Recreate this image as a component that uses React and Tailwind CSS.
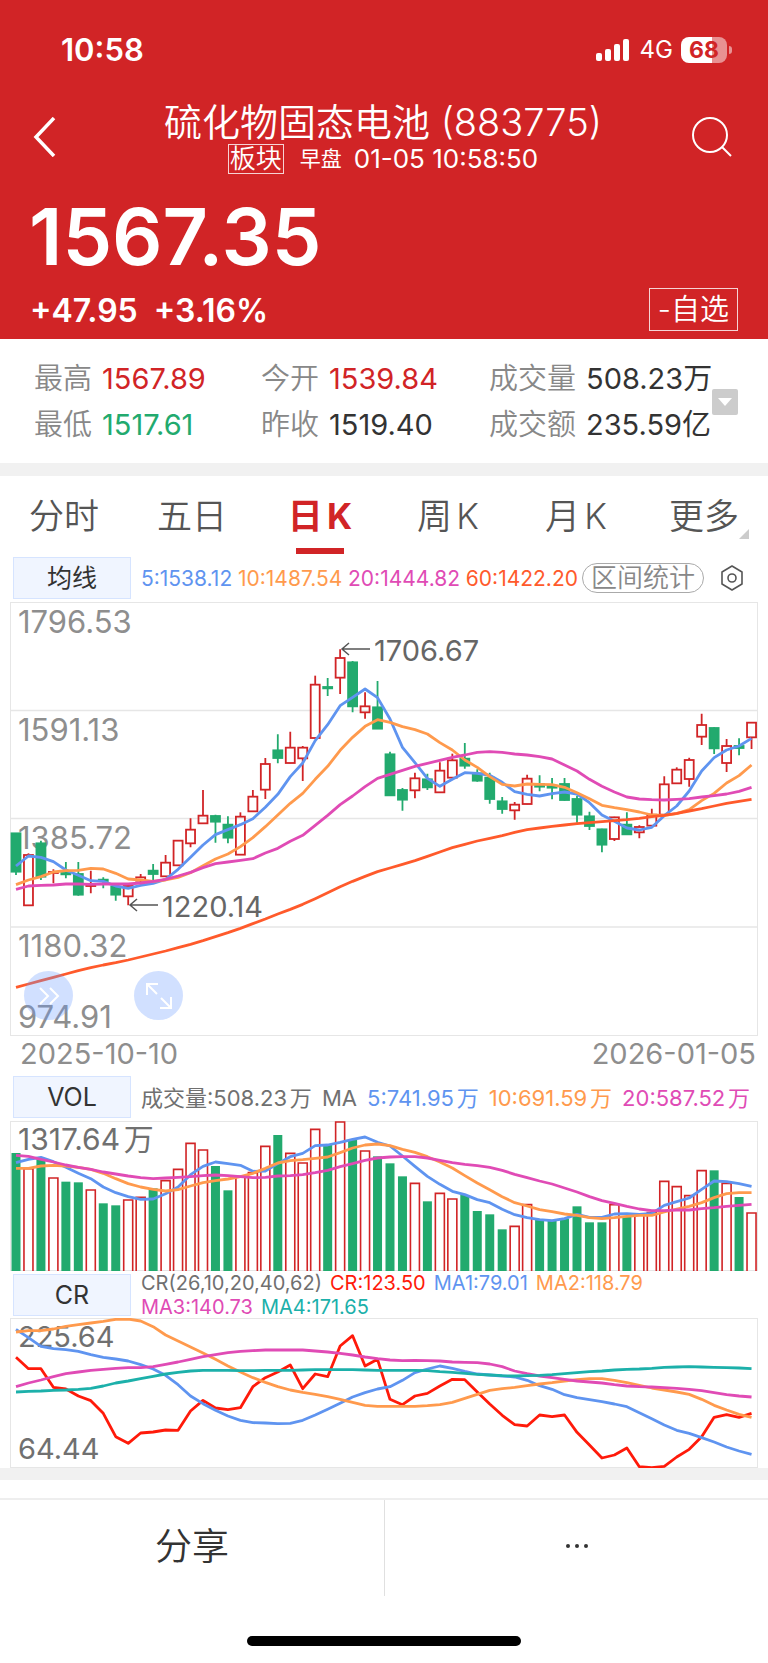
import { useState } from 'react';

const RED = '#d12426';
const GREEN = '#22aa6e';
const BLUE = '#5f94f0';
const ORANGE = '#ff9a4d';
const PINK = '#e04bb5';
const CORAL = '#ff5a2b';
const TEAL = '#1cb0aa';

const STEP = 187 / 15;
const barX = (i) => 6 + i * STEP;

// up/down, high, body top, body bottom, low, volume top
const DAYS = [
  ['d', 700, 700, 815, 825, 369], ['u', 760, 765, 916, 916, 416], ['d', 722, 730, 830, 840, 385],
  ['u', 808, 816, 819, 850, 444], ['d', 786, 819, 823, 835, 455], ['d', 786, 822, 884, 887, 457],
  ['u', 812, 855, 858, 880, 480], ['d', 832, 839, 843, 865, 520], ['d', 858, 860, 884, 902, 526],
  ['u', 850, 858, 889, 916, 510], ['u', 822, 832, 842, 850, 502], ['d', 792, 812, 822, 840, 475],
  ['u', 765, 788, 829, 829, 452], ['u', 722, 722, 796, 796, 418], ['u', 655, 689, 730, 742, 340],
  ['u', 570, 647, 670, 670, 360], ['d', 644, 648, 665, 728, 408], ['d', 649, 674, 713, 730, 481],
  ['u', 637, 650, 764, 764, 440], ['u', 570, 590, 634, 634, 428], ['u', 474, 492, 569, 597, 349],
  ['d', 403, 451, 474, 490, 315], ['u', 395, 443, 489, 490, 370], ['u', 438, 443, 475, 543, 399],
  ['u', 227, 254, 414, 414, 298], ['d', 234, 261, 265, 288, 345], ['u', 148, 174, 233, 282, 276],
  ['d', 183, 187, 319, 337, 330], ['u', 277, 319, 337, 356, 363], ['d', 243, 322, 386, 387, 379],
  ['d', 455, 463, 586, 587, 400], ['d', 564, 570, 599, 632, 439], ['u', 518, 535, 571, 595, 460],
  ['d', 521, 538, 562, 570, 514], ['u', 487, 512, 577, 578, 490], ['u', 461, 481, 533, 533, 507],
  ['d', 429, 476, 497, 506, 495], ['d', 508, 520, 542, 545, 543], ['d', 518, 533, 597, 611, 553],
  ['d', 591, 604, 627, 641, 598], ['u', 606, 614, 631, 659, 589], ['u', 524, 536, 612, 613, 524],
  ['d', 526, 552, 560, 574, 570], ['d', 534, 557, 563, 598, 573], ['d', 534, 552, 600, 602, 566],
  ['d', 587, 597, 644, 668, 529], ['d', 635, 649, 678, 690, 577], ['d', 686, 688, 734, 757, 577],
  ['u', 650, 652, 717, 723, 524], ['d', 637, 674, 703, 704, 560], ['u', 676, 681, 697, 715, 555],
  ['u', 626, 644, 677, 678, 548], ['u', 529, 553, 644, 645, 454], ['u', 502, 509, 550, 550, 470],
  ['u', 473, 480, 537, 560, 497], ['u', 341, 375, 410, 435, 422], ['d', 382, 384, 445, 462, 421],
  ['u', 417, 438, 489, 516, 460], ['d', 415, 438, 444, 466, 501], ['u', 367, 368, 412, 447, 549],
];

const PRICE_LINES = [
  [BLUE, [798, 768, 772, 785, 810, 826, 842, 844, 858, 865, 856, 850, 838, 808, 772, 735, 704, 689, 674, 656, 622, 583, 530, 489, 422, 374, 317, 292, 267, 293, 357, 442, 488, 535, 559, 538, 518, 520, 526, 547, 575, 583, 588, 581, 576, 582, 608, 645, 664, 684, 690, 682, 647, 618, 573, 513, 473, 450, 438, 415]],
  [ORANGE, [854, 840, 830, 816, 812, 811, 805, 807, 820, 837, 840, 844, 840, 832, 818, 797, 777, 762, 740, 713, 680, 645, 610, 580, 538, 499, 451, 412, 379, 359, 367, 380, 389, 402, 428, 450, 480, 502, 530, 553, 558, 552, 553, 554, 562, 578, 596, 616, 623, 629, 636, 645, 646, 641, 629, 602, 580, 549, 527, 495]],
  [PINK, [868, 858, 856, 855, 852, 852, 853, 852, 852, 852, 849, 844, 838, 828, 817, 803, 791, 786, 781, 776, 759, 745, 724, 706, 676, 646, 614, 588, 560, 535, 523, 511, 499, 490, 481, 472, 465, 457, 455, 457, 462, 465, 470, 477, 495, 513, 538, 559, 576, 591, 597, 599, 600, 598, 596, 591, 587, 582, 574, 562]],
  [CORAL, [1162, 1152, 1142, 1132, 1122, 1112, 1103, 1095, 1088, 1080, 1071, 1062, 1053, 1043, 1033, 1022, 1010, 998, 985, 971, 957, 942, 928, 913, 896, 878, 860, 844, 829, 815, 804, 793, 782, 769, 756, 743, 733, 723, 715, 707, 697, 689, 684, 679, 675, 671, 668, 665, 662, 659, 655, 650, 646, 640, 633, 626, 618, 610, 604, 598]],
];

const VOLUME_LINES = [
  [BLUE, [398, 388, 382, 395, 412, 430, 446, 471, 488, 500, 508, 507, 491, 471, 434, 409, 396, 401, 406, 424, 423, 401, 380, 370, 347, 345, 337, 328, 321, 337, 348, 378, 409, 439, 463, 484, 494, 509, 518, 538, 554, 563, 569, 572, 566, 553, 562, 562, 552, 551, 553, 550, 526, 515, 504, 478, 453, 455, 461, 469]],
  [ORANGE, [415, 415, 408, 406, 408, 412, 418, 430, 446, 461, 471, 478, 483, 479, 468, 458, 452, 447, 440, 430, 415, 399, 392, 389, 385, 381, 368, 354, 345, 342, 347, 358, 367, 380, 396, 414, 437, 459, 479, 500, 518, 528, 539, 545, 552, 556, 563, 566, 563, 559, 556, 556, 546, 537, 529, 518, 503, 491, 488, 488]],
  [PINK, [376, 379, 388, 396, 405, 412, 418, 426, 432, 438, 443, 446, 444, 442, 440, 437, 435, 437, 440, 443, 442, 438, 437, 434, 428, 421, 410, 401, 391, 384, 381, 380, 380, 384, 391, 398, 403, 407, 412, 421, 433, 443, 453, 462, 474, 486, 500, 512, 520, 529, 537, 542, 542, 540, 540, 536, 533, 529, 526, 523]],
];

const CR_LINES = [
  ['#ff1a0a', [262, 296, 296, 352, 357, 378, 392, 430, 500, 520, 489, 486, 480, 481, 423, 391, 414, 419, 413, 350, 323, 306, 285, 356, 312, 320, 228, 197, 288, 268, 388, 404, 378, 370, 348, 328, 329, 366, 402, 436, 464, 468, 435, 440, 435, 487, 525, 564, 555, 534, 590, 593, 589, 561, 538, 500, 442, 434, 442, 430]],
  [BLUE, [178, 203, 229, 236, 239, 244, 254, 262, 267, 273, 284, 297, 316, 344, 378, 401, 421, 438, 451, 458, 459, 461, 460, 451, 435, 418, 400, 381, 368, 357, 350, 331, 308, 297, 288, 295, 304, 312, 315, 318, 321, 331, 347, 358, 374, 383, 389, 395, 402, 410, 428, 446, 465, 481, 490, 503, 516, 531, 543, 553]],
  [ORANGE, [186, 182, 182, 177, 169, 164, 159, 154, 148, 147, 153, 170, 195, 213, 231, 249, 268, 288, 306, 323, 337, 350, 360, 367, 373, 380, 388, 397, 406, 409, 409, 409, 409, 407, 404, 397, 385, 373, 361, 356, 352, 347, 342, 338, 333, 329, 326, 326, 331, 338, 346, 354, 360, 366, 373, 388, 406, 420, 433, 442]],
  [PINK, [350, 339, 330, 320, 311, 306, 301, 298, 295, 293, 293, 290, 283, 276, 268, 260, 254, 248, 244, 242, 240, 240, 240, 240, 243, 246, 250, 255, 261, 266, 270, 272, 271, 272, 273, 276, 277, 278, 282, 290, 303, 311, 318, 323, 328, 333, 336, 339, 344, 348, 350, 351, 353, 355, 358, 362, 368, 374, 378, 381]],
  [TEAL, [366, 364, 363, 361, 360, 358, 355, 348, 339, 333, 326, 319, 312, 307, 303, 301, 301, 301, 302, 302, 301, 301, 301, 300, 299, 299, 299, 299, 300, 301, 301, 301, 301, 302, 305, 307, 310, 313, 315, 317, 318, 317, 316, 314, 311, 308, 305, 303, 300, 298, 297, 295, 292, 291, 290, 291, 292, 293, 294, 296]],
];

const STATS = [
  { label: '最高', value: '1567.89', color: 'text-[#d12426]' },
  { label: '今开', value: '1539.84', color: 'text-[#d12426]' },
  { label: '成交量', value: '508.23万', color: 'text-[#333333]' },
  { label: '最低', value: '1517.61', color: 'text-[#22aa6e]' },
  { label: '昨收', value: '1519.40', color: 'text-[#333333]' },
  { label: '成交额', value: '235.59亿', color: 'text-[#333333]' },
];

const TABS = ['分时', '五日', '日K', '周K', '月K', '更多'];

function Lines({ lines, top }) {
  return lines.map(([color, values]) => (
    <polyline
      key={color}
      points={values.map((v, i) => `${barX(i)},${(v - top) / 3}`).join(' ')}
      fill="none"
      stroke={color}
      strokeWidth="2.8"
      strokeLinejoin="round"
    />
  ));
}

function StatusBar() {
  return (
    <div className="flex items-center justify-between pt-7 pr-9 pl-[61px]">
      <span className="text-[31px] leading-11 font-semibold">10:58</span>
      <div className="flex items-center gap-2">
        <svg width="36" height="24" viewBox="0 0 36 24" fill="#fff">
          <rect x="0" y="15" width="6" height="8" rx="2" />
          <rect x="9" y="11" width="6" height="12" rx="2" />
          <rect x="18" y="6" width="6" height="17" rx="2" />
          <rect x="27" y="1" width="6" height="22" rx="2" />
        </svg>
        <span className="text-2xl leading-8">4G</span>
        <div className="flex items-center gap-0.5">
          <div className="flex h-[26px] w-[46px] items-center justify-center rounded-lg bg-linear-to-r from-white from-68% to-white/50 to-68% text-[23px] leading-none font-bold text-[#d12426]">
            68
          </div>
          <div className="h-2 w-[3px] rounded-r-full bg-white/50" />
        </div>
      </div>
    </div>
  );
}

function Header() {
  return (
    <header className="bg-[#d12426] pb-2 text-white">
      <StatusBar />
      <div className="flex items-start justify-between pt-[29px] pr-[34px] pl-8">
        <button aria-label="返回" className="pt-4">
          <svg width="26" height="40" viewBox="0 0 26 40" fill="none" stroke="#fff" strokeWidth="3.5">
            <path d="M22 1 4 20l18 19" />
          </svg>
        </button>
        <div className="flex flex-col items-center pl-4">
          <h1 className="text-[38px] leading-[43px] font-[350]">硫化物固态电池 (883775)</h1>
          <div className="flex items-center text-[26px] leading-7">
            <span className="border border-white/80 px-px leading-7 font-[350]">板块</span>
            <span className="ml-4 text-[21px]">早盘</span>
            <span className="ml-3">01-05 10:58:50</span>
          </div>
        </div>
        <button aria-label="搜索" className="pt-4">
          <svg width="42" height="42" viewBox="0 0 42 42" fill="none" stroke="#fff" strokeWidth="2">
            <circle cx="18" cy="18" r="17" />
            <path d="m30 30 9 9" />
          </svg>
        </button>
      </div>
      <div className="mt-[22px] pl-[29px] text-[79px] leading-20 font-semibold">1567.35</div>
      <div className="mt-[11px] flex items-center justify-between px-[30px]">
        <div className="flex gap-4 pt-1 text-[32px] leading-10 font-semibold">
          <span>+47.95</span>
          <span>+3.16%</span>
        </div>
        <button className="border border-white/80 px-2 text-[29px] leading-[41px] font-[350]">-自选</button>
      </div>
    </header>
  );
}

function Stats() {
  return (
    <section className="flex items-center border-b-[13px] border-[#f1f1f1] pt-[17px] pr-[30px] pb-[15px] pl-[34px]">
      <div className="grid flex-1 grid-cols-[227px_228px_1fr] text-[29px] leading-[46px] whitespace-nowrap [text-autospace:no-autospace]">
        {STATS.map((s) => (
          <div key={s.label} className="flex gap-2.5">
            <span className="font-[350] text-[#888888]">{s.label}</span>
            <span className={s.color}>{s.value}</span>
          </div>
        ))}
      </div>
      <button aria-label="展开" className="flex h-[26px] w-[26px] shrink-0 items-center justify-center rounded-xs bg-[#cccccc]">
        <svg width="14" height="10" viewBox="0 0 14 10" fill="#fff">
          <path d="M0 1h14L7 9z" />
        </svg>
      </button>
    </section>
  );
}

function Tabs() {
  const [active, setActive] = useState('日K');

  return (
    <nav className="grid grid-cols-6">
      {TABS.map((tab) => (
        <button
          key={tab}
          onClick={() => setActive(tab)}
          className={`relative flex flex-col items-center pt-2 pb-px text-[35px] leading-16 ${
            active === tab ? 'font-bold text-[#d12426]' : 'font-[350] text-[#555555]'
          }`}
        >
          {tab}
          {active === tab && <span className="h-1.5 w-12 bg-[#d12426]" />}
          {tab === '更多' && (
            <svg className="absolute right-[19px] bottom-4" width="10" height="10" viewBox="0 0 10 10" fill="#cccccc">
              <path d="M10 0v10H0z" />
            </svg>
          )}
        </button>
      ))}
    </nav>
  );
}

function IndicatorButton({ children }) {
  return (
    <button className="h-[42px] w-[118px] shrink-0 border border-[#d6e4ff] bg-[#f0f5ff] text-[25px] leading-10 text-[#333333]">
      {children}
    </button>
  );
}

function PriceChart() {
  return (
    <div className="relative mx-2.5">
      <svg className="block w-full" viewBox="0 0 748 434" fontFamily="Inter, sans-serif">
        <g fill="none" stroke="#e6e6e6">
          <rect x="0.5" y="0.5" width="747" height="433" />
          <path d="M0 108.5h748M0 216.5h748M0 325h748" strokeWidth="1.5" />
        </g>
        <g fill="#8e8e8e" fontSize="31">
          <text x="8" y="31">1796.53</text>
          <text x="8" y="139">1591.13</text>
          <text x="8" y="247">1385.72</text>
          <text x="8" y="355">1180.32</text>
          <text x="8" y="426">974.91</text>
        </g>
        {DAYS.map(([dir, high, top, bottom, low], i) => {
          const [h, t, b, l] = [high, top, bottom, low].map((v) => (v - 6) / 3);
          const up = dir === 'u';
          return (
            <g key={i} stroke={up ? RED : GREEN} strokeWidth="1.8">
              <path d={`M${barX(i)} ${h}V${t}M${barX(i)} ${b}V${l}`} />
              <rect x={barX(i) - 4.5} y={t} width="9" height={b - t} fill={up ? 'none' : GREEN} />
            </g>
          );
        })}
        <Lines lines={PRICE_LINES} top={6} />
        <path d="M360 47h-28m7-6-7 6 7 6M148 303h-28m7-6-7 6 7 6" stroke="#555555" strokeWidth="1.5" fill="none" />
        <g fill="#666666" fontSize="29">
          <text x="364" y="59">1706.67</text>
          <text x="152" y="315">1220.14</text>
        </g>
      </svg>
      <div className="absolute bottom-4 left-[14px] flex gap-[61px]">
        <button aria-label="快进" className="flex size-[49px] items-center justify-center rounded-full bg-[#6699ff]/30">
          <svg width="22" height="18" viewBox="0 0 22 18" fill="none" stroke="#fff" strokeWidth="2">
            <path d="m2 1 8 8-8 8M12 1l8 8-8 8" />
          </svg>
        </button>
        <button aria-label="全屏" className="flex size-[49px] items-center justify-center rounded-full bg-[#6699ff]/30">
          <svg width="26" height="26" viewBox="0 0 26 26" fill="none" stroke="#fff" strokeWidth="2">
            <path d="M1 12V1h11M1 1l10 10M25 14v11H14M25 25 15 15" />
          </svg>
        </button>
      </div>
    </div>
  );
}

function VolumeChart() {
  return (
    <svg className="block w-full px-2.5" viewBox="0 0 748 150" fontFamily="Inter, 'Noto Sans CJK SC', sans-serif">
      <rect x="0.5" y="0.5" width="747" height="149" fill="none" stroke="#e6e6e6" />
      <text x="8" y="29" fill="#707070" fontSize="30">1317.64万</text>
      {DAYS.map(([dir, , , , , volume], i) => {
        const y = (volume - 273) / 3;
        return dir === 'u' ? (
          <path key={i} d={`M${barX(i) - 4.5} 150V${y}h9V150`} fill="none" stroke={RED} strokeWidth="1.6" />
        ) : (
          <rect key={i} x={barX(i) - 4.5} y={y} width="9" height={150 - y} fill={GREEN} />
        );
      })}
      <Lines lines={VOLUME_LINES} top={273} />
    </svg>
  );
}

function CrChart() {
  return (
    <svg className="block w-full px-2.5" viewBox="0 0 748 150" fontFamily="Inter, sans-serif">
      <rect x="0.5" y="0.5" width="747" height="149" fill="none" stroke="#e6e6e6" />
      <g fill="#707070" fontSize="29">
        <text x="8" y="29">225.64</text>
        <text x="8" y="141">64.44</text>
      </g>
      <Lines lines={CR_LINES} top={144} />
    </svg>
  );
}

export default function App() {
  return (
    <main className="min-h-screen bg-white font-[Inter,'Noto_Sans_CJK_SC',sans-serif] [text-autospace:normal]">
      <Header />
      <Stats />
      <Tabs />

      <div className="mt-0.5 flex items-center pr-6 pb-[3px] pl-[13px]">
        <IndicatorButton>均线</IndicatorButton>
        <div className="ml-2.5 flex flex-1 justify-between pt-0.5 text-[21px] whitespace-nowrap">
          <span className="text-[#5f94f0]">5:1538.12</span>
          <span className="text-[#ff9a4d]">10:1487.54</span>
          <span className="text-[#e04bb5]">20:1444.82</span>
          <span className="text-[#ff5a2b]">60:1422.20</span>
        </div>
        <button className="ml-1 shrink-0 rounded-full border border-[#aaaaaa] px-2 text-[26px] leading-7 font-[350] text-[#888888]">
          区间统计
        </button>
        <button aria-label="设置" className="ml-4">
          <svg width="24" height="26" viewBox="0 0 24 26" fill="none" stroke="#555" strokeWidth="1.6">
            <path d="M12 1 22 7v12l-10 6L2 19V7z" strokeLinejoin="round" />
            <circle cx="12" cy="13" r="4" />
          </svg>
        </button>
      </div>
      <PriceChart />

      <div className="flex justify-between pr-3 pl-5 text-[29px] leading-9 text-[#8e8e8e]">
        <span>2025-10-10</span>
        <span>2026-01-05</span>
      </div>

      <div className="mt-1 flex items-center pr-[18px] pb-[3px] pl-[13px]">
        <IndicatorButton>VOL</IndicatorButton>
        <div className="ml-2.5 flex flex-1 justify-between pt-0.5 text-[22px] whitespace-nowrap text-[#707070]">
          <span>成交量:508.23万</span>
          <span>MA</span>
          <span className="text-[#5f94f0]">5:741.95万</span>
          <span className="text-[#ff9a4d]">10:691.59万</span>
          <span className="text-[#e04bb5]">20:587.52万</span>
        </div>
      </div>
      <VolumeChart />

      <div className="flex h-[47px] items-center pr-22 pl-[13px]">
        <IndicatorButton>CR</IndicatorButton>
        <div className="ml-2.5 flex flex-wrap gap-x-2 text-xl leading-6 whitespace-nowrap">
          <span className="text-[#707070]">CR(26,10,20,40,62)</span>
          <span className="text-[#ff1a0a]">CR:123.50</span>
          <span className="text-[#5f94f0]">MA1:79.01</span>
          <span className="text-[#ff9a4d]">MA2:118.79</span>
          <span className="text-[#e04bb5]">MA3:140.73</span>
          <span className="text-[#1cb0aa]">MA4:171.65</span>
        </div>
      </div>
      <CrChart />

      <div className="h-3 bg-[#f1f1f1]" />
      <footer className="mt-[18px] border-t-2 border-[#eeeeee]">
        <div className="grid grid-cols-2 text-[#333333]">
          <button className="h-24 pb-1 text-[37px] leading-none font-[350]">分享</button>
          <button className="flex h-24 items-center justify-center border-l border-[#e0e0e0] pb-1" aria-label="更多">
            <svg width="24" height="6" viewBox="0 0 24 6" fill="#333">
              <circle cx="3" cy="3" r="2" />
              <circle cx="12" cy="3" r="2" />
              <circle cx="21" cy="3" r="2" />
            </svg>
          </button>
        </div>
        <div className="mx-auto mt-10 mb-4 h-2.5 w-[274px] rounded-full bg-black" />
      </footer>
    </main>
  );
}
